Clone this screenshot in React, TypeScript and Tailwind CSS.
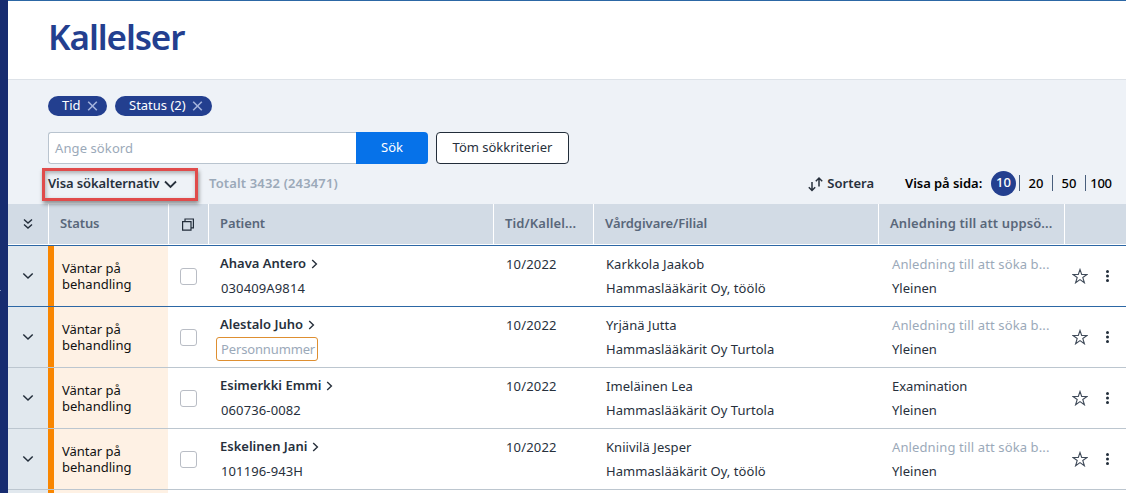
import React from "react";

type Row = {
  name: string;
  id?: string;
  provider: string;
  branch: string;
  reason?: string;
  active?: boolean;
};

const rows: Row[] = [
  { name: "Ahava Antero", id: "030409A9814", provider: "Karkkola Jaakob", branch: "Hammaslääkärit Oy, töölö", active: true },
  { name: "Alestalo Juho", provider: "Yrjänä Jutta", branch: "Hammaslääkärit Oy Turtola" },
  { name: "Esimerkki Emmi", id: "060736-0082", provider: "Imeläinen Lea", branch: "Hammaslääkärit Oy Turtola", reason: "Examination" },
  { name: "Eskelinen Jani", id: "101196-943H", provider: "Kniivilä Jesper", branch: "Hammaslääkärit Oy, töölö" },
];

const grid = "grid grid-cols-[40px_120px_40px_285px_100px_285px_186px_62px]";

function Chevron() {
  return (
    <svg width="12" height="8" viewBox="0 0 12 8" fill="none" stroke="currentColor" strokeWidth="1.5">
      <path d="M1.3 1.5 6 6 10.7 1.5" />
    </svg>
  );
}

function Chip({ label, width }: { label: string; width: string }) {
  return (
    <div className={`flex h-5 items-center rounded-full bg-[#233f8f] pl-[14px] text-[13px] text-white ${width}`}>
      <span className="whitespace-nowrap">{label}</span>
      <svg className="mr-[9px] ml-auto text-[#a3b2dc]" width="11" height="11" viewBox="0 0 11 11" stroke="currentColor" strokeWidth="1.6">
        <path d="M1.2 .7 9.8 9.3M9.8 .7 1.2 9.3" />
      </svg>
    </div>
  );
}

function HeaderCell({ label, tracking = "" }: { label: string; tracking?: string }) {
  return (
    <div className={`flex items-center border-l border-white pb-[2px] pl-[11px] text-[13px] font-semibold whitespace-nowrap text-[#59677a] ${tracking}`}>
      {label}
    </div>
  );
}

function TableRow({ row }: { row: Row }) {
  return (
    <div className={`${grid} h-[61px] shrink-0 border-b bg-white text-[13px] text-[#27303c] ${row.active ? "border-[#2c67a5]" : "border-[#bcc6cf]"}`}>
      <div className="flex items-center justify-center bg-[#e1e8ee] text-[#222d3a]">
        <Chevron />
      </div>
      <div className="flex items-center border-l-[6px] border-[#f98600] bg-[#fef1e4] pl-2 leading-4 text-[#111111]">
        <span>Väntar på<br />behandling</span>
      </div>
      <div className="flex items-center justify-center">
        <span className="h-[17px] w-[17px] rounded-[3px] border border-[#b9bdc5] bg-white" />
      </div>
      <div className="pt-[6px] pl-3">
        <div className="flex h-6 items-center font-semibold whitespace-nowrap">
          {row.name}
          <svg className="ml-[5px]" width="7" height="10" viewBox="0 0 7 10" fill="none" stroke="currentColor" strokeWidth="1.4">
            <path d="M1.2 1 5.4 5 1.2 9" />
          </svg>
        </div>
        {row.id ? (
          <div className="flex h-[25px] items-center pl-px tracking-[0.12px]">{row.id}</div>
        ) : (
          <div className="-ml-1 flex h-6 w-[102px] items-center rounded-[3px] border border-[#de8f31] pt-px pl-1 tracking-[-0.14px] text-[#9ba9b9]">
            Personnummer
          </div>
        )}
      </div>
      <div className="pt-[7px] pl-[13px]">
        <div className="flex h-6 items-center tracking-[0.18px]">10/2022</div>
      </div>
      <div className="pt-[7px] pl-[13px] whitespace-nowrap">
        <div className="flex h-6 items-center tracking-[0.06px]">{row.provider}</div>
        <div className="flex h-6 items-center tracking-[0.05px]">{row.branch}</div>
      </div>
      <div className="pt-[7px] pl-[14px] whitespace-nowrap">
        {row.reason ? (
          <div className="flex h-6 items-center tracking-[-0.08px]">{row.reason}</div>
        ) : (
          <div className="flex h-6 items-center tracking-[0.12px] text-[#9ba9b9]">Anledning till att söka b...</div>
        )}
        <div className="flex h-6 items-center">Yleinen</div>
      </div>
      <div className="flex items-center pl-2">
        <svg width="16" height="16" viewBox="0 0 16 16" fill="none" stroke="#404b5a" strokeWidth="1.1">
          <path d="M8 1.5 9.7 6.5H15L10.8 9.5 12.4 14.8 8 11.6 3.6 14.8 5.2 9.5 1 6.5H6.3Z" />
        </svg>
        <svg className="ml-[17px]" width="5" height="14" viewBox="0 0 5 14" fill="#222d3a">
          <circle cx="2.5" cy="2.5" r="1.5" />
          <circle cx="2.5" cy="7" r="1.5" />
          <circle cx="2.5" cy="11.5" r="1.5" />
        </svg>
      </div>
    </div>
  );
}

export default function App() {
  return (
    <div className="flex h-[493px] w-[1126px] overflow-hidden bg-white font-['Noto_Sans','Open_Sans',sans-serif]">
      <aside className="flex w-2 shrink-0 flex-col bg-[#172c70]">
        <span className="mt-[290px] h-px w-px bg-[#8595bd]" />
      </aside>
      <main className="flex w-[1118px] shrink-0 flex-col">
        <header className="flex h-[79px] shrink-0 items-center border-t border-[#2c67a5] pb-[6px] pl-10">
          <h1 className="text-[35px] font-semibold tracking-[-1.1px] text-[#233f8f]">Kallelser</h1>
        </header>
        <section className="h-[125px] shrink-0 border-t border-[#dde2e8] bg-[#eef2f7] pl-10">
          <div className="flex gap-2 pt-4">
            <Chip label="Tid" width="w-[59px]" />
            <Chip label="Status (2)" width="w-[97px]" />
          </div>
          <div className="mt-4 flex h-8 text-[13px]">
            <div className="flex w-[308px] items-center rounded-l-[3px] border border-r-0 border-[#b9c4cf] bg-white pt-[2px] pl-[6px] tracking-[0.1px] text-[#9ba9b9]">Ange sökord</div>
            <button className="w-[72px] rounded-r-[4px] bg-[#0672e9] text-white">Sök</button>
            <button className="ml-2 w-[133px] rounded-[4px] border border-[#222d3a] bg-white whitespace-nowrap text-[#27303c]">Töm sökkriterier</button>
          </div>
          <div className="mt-1 flex h-[33px] text-[13px] font-semibold whitespace-nowrap">
            <div className="relative z-10 -ml-[6px] flex w-[156px] items-center border-[3px] border-[#e04b4b] pb-px pl-[3px] tracking-[-0.1px] text-[#27303c] shadow-[1px_3px_4px_rgba(0,0,0,0.4),inset_1px_2px_4px_rgba(0,0,0,0.3)]">
              Visa sökalternativ
              <svg className="mt-px ml-[5px]" width="13" height="9" viewBox="0 0 13 9" fill="none" stroke="currentColor" strokeWidth="1.8">
                <path d="M1 1.5 6.5 7 12 1.5" />
              </svg>
            </div>
            <div className="mt-[5px] ml-[11px] h-5 leading-5 tracking-[0.15px] text-[#9ba9b9]">Totalt 3432 (243471)</div>
            <div className="mt-[6px] ml-auto flex h-5 items-center text-[#27303c]">
              <svg className="mr-1" width="15" height="16" viewBox="0 0 15 16" fill="none" stroke="currentColor" strokeWidth="1.5">
                <path d="M4 6V14.5M.8 11.3 4 14.5 7.2 11.3M11 10.5V2M7.8 5.2 11 2 14.2 5.2" />
              </svg>
              Sortera
            </div>
            <div className="mt-[2px] ml-[31px] flex h-[26px] w-[221px] items-center text-black">
              <span className="w-[86px] shrink-0 pt-[2px] tracking-[-0.05px]">Visa på sida:</span>
              <span className="flex h-[25px] w-[25px] shrink-0 items-center justify-center rounded-full bg-[#233f8f] font-medium text-white">10</span>
              <span className="ml-[3px] h-4 w-px shrink-0 bg-[#485e7c]" />
              <span className="w-[32px] pt-px text-center font-medium">20</span>
              <span className="h-4 w-px shrink-0 bg-[#485e7c]" />
              <span className="w-[32px] pt-px text-center font-medium">50</span>
              <span className="h-4 w-px shrink-0 bg-[#485e7c]" />
              <span className="w-[30px] pt-px text-center font-medium tracking-[-0.3px]">100</span>
            </div>
          </div>
        </section>
        <div className={`${grid} h-[42px] shrink-0 border-b border-[#2c67a5] bg-[#d2dbe5] shadow-[inset_0_-1px_0_white]`}>
          <div className="flex items-center justify-center pb-px text-[#222d3a]">
            <svg width="10" height="12" viewBox="0 0 10 12" fill="none" stroke="currentColor" strokeWidth="1.4">
              <path d="M1 1.5 5 5 9 1.5M1 6.5 5 10 9 6.5" />
            </svg>
          </div>
          <HeaderCell label="Status" tracking="tracking-[-0.1px]" />
          <div className="flex items-center justify-center border-l border-white pr-[2px] text-[#222d3a]">
            <svg width="12" height="13" viewBox="0 0 12 13" fill="none" stroke="currentColor" strokeWidth="1.2">
              <path d="M.6 3.6H9V12.2H.6ZM3 3.6V1H11.4V9.8H9" />
            </svg>
          </div>
          <HeaderCell label="Patient" tracking="tracking-[-0.1px]" />
          <HeaderCell label="Tid/Kallel..." tracking="tracking-[0.1px]" />
          <HeaderCell label="Vårdgivare/Filial" tracking="tracking-[-0.05px]" />
          <HeaderCell label="Anledning till att uppsö..." tracking="tracking-[0.12px]" />
          <HeaderCell label="" />
        </div>
        {rows.map((row) => (
          <TableRow key={row.name} row={row} />
        ))}
        <div className={`${grid} h-1 shrink-0`}>
          <div className="bg-[#e1e8ee]" />
          <div className="border-l-[6px] border-[#f98600] bg-[#fef1e4]" />
        </div>
      </main>
    </div>
  );
}
